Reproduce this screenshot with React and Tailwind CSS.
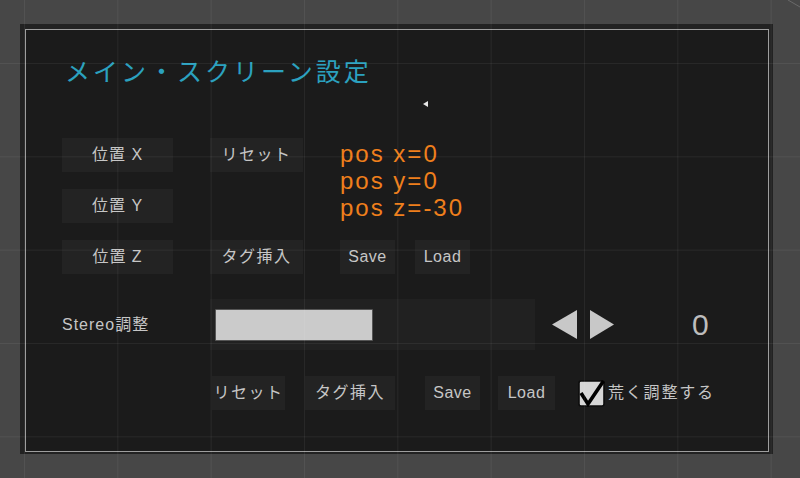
import React from 'react';

const font = { fontFamily: '"Liberation Sans", "Noto Sans CJK JP", sans-serif' };

const Btn = ({ w, children, className = '' }) => (
    <div className={`h-[34px] bg-[#232323] flex items-center justify-center text-[16px] text-[#c6c6c6] ${className}`} style={{ width: w }}>
        {children}
    </div>
);

const Check = () => (
    <svg width="27" height="27" viewBox="0 0 27 27" className="shrink-0">
        <rect x="1" y="1" width="25" height="25" rx="2" fill="#d6d6d6" stroke="#0d0d0d" strokeWidth="1.6" />
        <path d="M3 13 L10 24 L25.5 1" fill="none" stroke="#000" strokeWidth="3.6" strokeLinejoin="miter" />
    </svg>
);

const App = () => {
    return (
        <div className="w-[800px] h-[478px] relative overflow-hidden bg-[#474747] pt-[24px] pl-[20px]" style={font}>
            <div className="w-[753px] h-[430px] bg-[#222222] pt-[5px] pl-[5px] pr-[4px] pb-[2px]">
                <div className="h-full border border-[#9e9e9e] bg-[#1b1b1b] pl-[36px] pt-[26px] flex flex-col">
                    {/* title */}
                    <div className="text-[25px] leading-[32px] tracking-[3px] text-[#2ba1bf] pl-[3px]">
                        メイン・スクリーン設定
                    </div>
                    <div className="mt-[13px] ml-[361px] h-[6px]">
                        <svg width="5" height="6" viewBox="0 0 5 6"><polygon points="5,0 5,6 0,3" fill="#e8e8e8" /></svg>
                    </div>

                    {/* position rows */}
                    <div className="mt-[31px] grid grid-cols-[111px_93px_200px] grid-rows-[34px_34px_34px] gap-x-[37px] gap-y-[17px]">
                        <Btn w={111} className="tracking-[1px]">位置 X</Btn>
                        <Btn w={93} className="tracking-[1.5px]">リセット</Btn>
                        <div className="row-span-2 pt-[2px] text-[24px] leading-[27px] tracking-[2px] text-[#ef7f1c]">
                            <div>pos x=0</div>
                            <div>pos y=0</div>
                            <div>pos z=-30</div>
                        </div>
                        <Btn w={111} className="tracking-[1px]">位置 Y</Btn>
                        <div />
                        <Btn w={111} className="tracking-[1px]">位置 Z</Btn>
                        <Btn w={93} className="tracking-[1.5px]">タグ挿入</Btn>
                        <div className="flex gap-[20px]">
                            <Btn w={55} className="tracking-[0.5px]">Save</Btn>
                            <Btn w={55} className="tracking-[0.5px]">Load</Btn>
                        </div>
                    </div>

                    {/* stereo */}
                    <div className="mt-[25px] flex items-center">
                        <div className="w-[148px] text-[16px] tracking-[1px] text-[#c6c6c6]">Stereo調整</div>
                        <div className="w-[325px] h-[51px] bg-[#212121] pl-[5px] pt-[10px]">
                            <div className="w-[158px] h-[32px] bg-[#cbcbcb] border border-[#555555] rounded-[1px]" />
                        </div>
                        <div className="ml-[17px] flex items-center gap-[13px]">
                            <svg width="25" height="29" viewBox="0 0 25 29"><polygon points="25,0 25,29 0,14.5" fill="#c8c8c8" /></svg>
                            <svg width="24" height="29" viewBox="0 0 24 29"><polygon points="0,0 24,14.5 0,29" fill="#c8c8c8" /></svg>
                        </div>
                        <div className="ml-[78px] text-[30px] leading-none text-[#bdbdbd] pt-[1px]">0</div>
                    </div>

                    {/* bottom buttons */}
                    <div className="mt-[26px] ml-[150px] flex items-center">
                        <Btn w={73} className="tracking-[1.5px]">リセット</Btn>
                        <Btn w={90} className="ml-[20px] tracking-[1.5px]">タグ挿入</Btn>
                        <Btn w={55} className="ml-[30px] tracking-[0.5px]">Save</Btn>
                        <Btn w={57} className="ml-[18px] tracking-[0.5px]">Load</Btn>
                        <div className="ml-[23px] flex items-center gap-[3px]">
                            <Check />
                            <span className="text-[16px] tracking-[1.8px] text-[#c6c6c6]">荒く調整する</span>
                        </div>
                    </div>
                </div>
            </div>

            {/* scene grid overlay */}
            <div className="absolute inset-0 pointer-events-none bg-[linear-gradient(to_right,rgba(255,255,255,0.06)_1px,transparent_1px),linear-gradient(to_bottom,rgba(255,255,255,0.06)_1px,transparent_1px)] [background-size:93.33px_93.33px] [background-position:24px_63px]" />
            <svg className="absolute top-0 right-0 pointer-events-none" width="14" height="8" viewBox="0 0 14 8">
                <line x1="2" y1="0" x2="14" y2="7" stroke="#6a6a6a" strokeWidth="1" />
            </svg>
        </div>
    );
};

export default App;
